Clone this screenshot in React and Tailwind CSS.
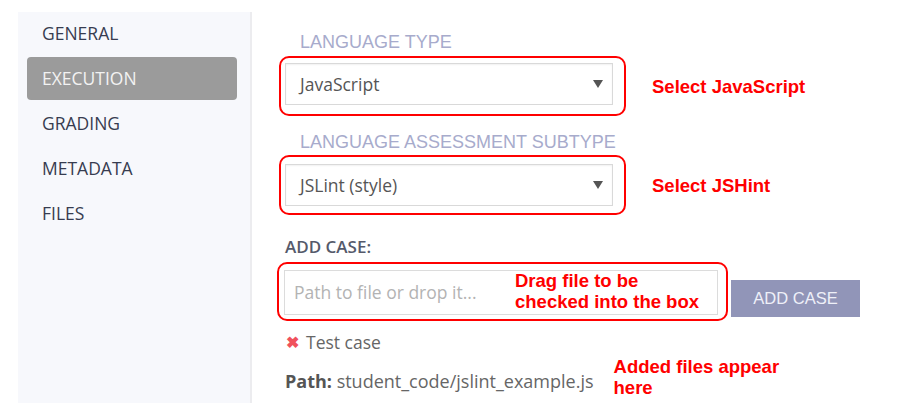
import { useState } from "react";

const MENU = ["GENERAL", "EXECUTION", "GRADING", "METADATA", "FILES"];

const ui = { fontFamily: '"Open Sans", "Liberation Sans", sans-serif' };
const arial = { fontFamily: '"Liberation Sans", Arial, sans-serif' };

function Caret() {
  return (
    <svg width="10" height="8" viewBox="0 0 10 8" className="shrink-0">
      <path d="M0 0 L10 0 L5 8 Z" fill="#555" />
    </svg>
  );
}

function SelectBox({ value }) {
  return (
    <div className="h-[42px] w-[328px] border border-[#d9d9d9] shadow-[inset_0_1px_2px_rgba(0,0,0,0.06)] bg-white flex items-center justify-between pl-[14px] pr-[9px]">
      <span className="text-[17.5px] text-[#555]" style={ui}>
        {value}
      </span>
      <Caret />
    </div>
  );
}

function Note({ children, className = "" }) {
  return (
    <div
      className={`text-[18.5px] font-bold text-[#ff0000] leading-[21px] ${className}`}
      style={arial}
    >
      {children}
    </div>
  );
}

export default function App() {
  const [active, setActive] = useState("EXECUTION");

  return (
    <div className="w-[904px] h-[419px] bg-white flex overflow-hidden">
      {/* Sidebar */}
      <div className="mt-[12px] ml-[18px] w-[234px] h-[391px] bg-[#f7f8fc] border-r-2 border-[#ececef] pl-[9px] pr-[13px] flex flex-col gap-[2px]">
        {MENU.map((item) => (
          <div
            key={item}
            onClick={() => setActive(item)}
            className={`h-[43px] shrink-0 flex items-center pl-[15px] rounded-[4px] text-[17.5px] ${
              active === item
                ? "bg-[#9b9b9b] text-[#f2f2f2]"
                : "text-[#373c50]"
            }`}
            style={ui}
          >
            {item}
          </div>
        ))}
      </div>

      {/* Main */}
      <div className="flex-1 pl-[25px] flex flex-col">
        <div
          className="mt-[31px] ml-[23px] h-[22px] flex items-center text-[18px] text-[#a7abcc]"
          style={arial}
        >
          LANGUAGE TYPE
        </div>

        <div className="mt-[3px] ml-[2px] flex items-center">
          <div className="w-[347px] h-[60px] border-[2.5px] border-[#ff0000] rounded-[10px] pl-[4px] pt-[5px]">
            <SelectBox value="JavaScript" />
          </div>
          <Note className="ml-[26px]">Select JavaScript</Note>
        </div>

        <div
          className="mt-[15px] ml-[23px] h-[22px] flex items-center text-[18px] text-[#a7abcc]"
          style={arial}
        >
          LANGUAGE ASSESSMENT SUBTYPE
        </div>

        <div className="mt-[2px] ml-[2px] flex items-center">
          <div className="w-[347px] h-[60px] border-[2.5px] border-[#ff0000] rounded-[10px] pl-[4px] pt-[7px]">
            <SelectBox value="JSLint (style)" />
          </div>
          <Note className="ml-[26px]">Select JSHint</Note>
        </div>

        <div
          className="mt-[21px] ml-[8px] h-[22px] flex items-center text-[17px] font-semibold text-[#555a6b]"
          style={ui}
        >
          ADD CASE:
        </div>

        <div className="mt-[4px] flex items-end">
          <div className="relative w-[451px] h-[59px] border-[2.5px] border-[#ff0000] rounded-[10px] pl-[5px] pt-[6px]">
            <div className="w-[434px] h-[45px] border border-[#dcdcdc] bg-white flex items-center pl-[9px]">
              <span className="text-[17.5px] text-[#b3b3b3]" style={ui}>
                Path to file or drop it...
              </span>
            </div>
            <Note className="absolute left-[236px] top-[6px]">
              Drag file to be
              <br />
              checked into the box
            </Note>
          </div>
          <button
            className="ml-[3px] mb-[4px] w-[129px] h-[37px] bg-[#9195b8] text-[#eef0f8] text-[16.5px] flex items-center justify-center"
            style={arial}
          >
            ADD CASE
          </button>
        </div>

        <div className="mt-[10px] ml-[9px] h-[22px] flex items-center gap-[7px]" style={ui}>
          <span className="text-[#f0515c] text-[16px] font-bold leading-none">✖</span>
          <span className="text-[17.5px] text-[#666]">Test case</span>
        </div>

        <div className="mt-[3px] ml-[8px] flex items-center">
          <div className="text-[18px] text-[#666] mt-[8px]" style={ui}>
            <span className="font-bold text-[#555]">Path:</span> student_code/jslint_example.js
          </div>
          <Note className="ml-[20px]">
            Added files appear
            <br />
            here
          </Note>
        </div>
      </div>
    </div>
  );
}
